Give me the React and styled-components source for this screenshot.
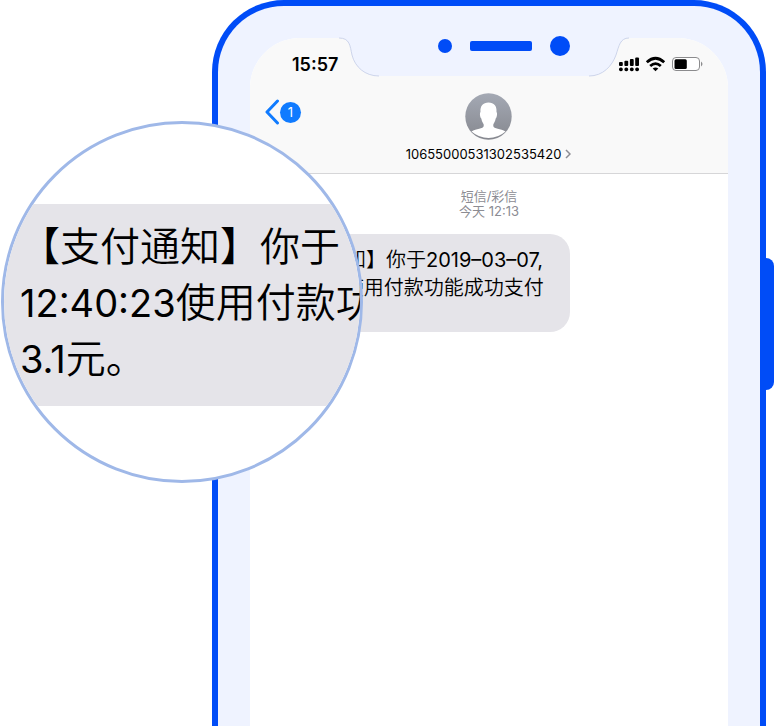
import React from "react";
import styled, { createGlobalStyle } from "styled-components";

const blue = "#004cf7";
const frame = "#eff3ff";
const bubble = "#e5e4e9";

const GlobalStyle = createGlobalStyle`
  * { box-sizing: border-box; }
  body {
    margin: 0;
    background: #fff;
    color: #000;
    font-family: Inter, "Noto Sans CJK SC", sans-serif;
  }
`;

const Page = styled.main`
  position: relative;
  display: flex;
  min-height: 100vh;
  padding-left: 212px;
  overflow: hidden;
`;

const Phone = styled.section`
  position: relative;
  flex: 1;
  display: flex;
  padding: 32px 32px 0;
  border: 6px solid ${blue};
  border-bottom: 0;
  border-radius: 72px 72px 0 0;
  background: ${frame};
`;

const SideButton = styled.div`
  width: 8px;
  height: 132px;
  margin-top: 258px;
  border-radius: 0 8px 8px 0;
  background: ${blue};
`;

const Screen = styled.div`
  flex: 1;
  border-radius: 50px 50px 0 0;
  background: #fff;
  overflow: hidden;
`;

const Header = styled.header`
  border-bottom: 1px solid #d6d6d8;
  background: #f9f9f9;
`;

const StatusBar = styled.div`
  display: flex;
  align-items: center;
  justify-content: space-between;
  height: 52px;
  padding: 0 25px 0 42px;
`;

const Time = styled.time`
  padding-top: 2px;
  font-size: 18px;
  line-height: 24px;
  font-weight: 600;
`;

const StatusIcons = styled.svg`
  display: block;
  width: 85px;
  height: 16px;
`;

const NavBar = styled.nav`
  display: grid;
  grid-template-columns: 1fr auto 1fr;
  align-items: start;
  padding: 3px 15px 11px 14px;
`;

const BackButton = styled.button`
  display: flex;
  align-items: center;
  justify-self: start;
  margin-top: 6px;
  padding: 0;
  border: 0;
  background: none;
  cursor: pointer;
`;

const BackIcon = styled.svg`
  display: block;
  width: 16px;
  height: 26px;
`;

const Badge = styled.span`
  width: 21px;
  height: 21px;
  border-radius: 50%;
  background: #107bff;
  color: #fff;
  font-family: Inter, sans-serif;
  font-size: 13px;
  line-height: 21px;
  text-align: center;
`;

const Contact = styled.button`
  display: flex;
  flex-direction: column;
  align-items: center;
  gap: 6px;
  padding: 0;
  border: 0;
  background: none;
  color: #000;
  font-family: inherit;
  cursor: pointer;
`;

const Avatar = styled.svg`
  display: block;
  width: 47px;
  height: 47px;
`;

const Sender = styled.span`
  display: flex;
  align-items: center;
  gap: 4px;
  font-size: 13px;
  line-height: 16px;
`;

const Chevron = styled.svg`
  display: block;
  width: 6px;
  height: 10px;
`;

const Thread = styled.div`
  padding: 15px 4px;
`;

const Stamp = styled.p`
  margin: 0 0 15px;
  color: #8c8c93;
  font-size: 13px;
  line-height: 15px;
  text-align: center;
`;

const Message = styled.p`
  width: fit-content;
  min-width: 316px;
  margin: 0;
  padding: 12px 12px 2px;
  border-radius: 20px;
  background: ${bubble};
  font-size: 20px;
  line-height: 28px;
  font-weight: 350;
  white-space: nowrap;
`;

const Figures = styled.span`
  font-size: ${(p) => p.$size}px;
  line-height: 1;
  font-weight: 400;
`;

const Housing = styled.div`
  position: absolute;
  top: 30px;
  left: 122px;
  right: 132px;
  display: flex;
  flex-direction: column;
  align-items: center;
`;

const NotchShape = styled.svg`
  position: absolute;
  top: 1px;
  width: 290px;
  height: 40px;
`;

const Sensors = styled.div`
  position: relative;
  display: flex;
  align-items: center;
  gap: 18px;
  margin-left: 40px;
`;

const Sensor = styled.span`
  width: ${(p) => p.$width}px;
  height: ${(p) => p.$height}px;
  border-radius: ${(p) => p.$radius}px;
  background: ${blue};
`;

const Lens = styled.aside`
  position: absolute;
  top: 121px;
  left: 1px;
  width: 362px;
  height: 362px;
  padding-top: 80px;
  border: 3px solid #9fb8e8;
  border-radius: 50%;
  background: #fff;
  overflow: hidden;
`;

const LensMessage = styled.p`
  margin: 0;
  padding: 15px 16px 19px;
  background: ${bubble};
  font-size: 40px;
  line-height: 56px;
  font-weight: 350;
  white-space: nowrap;
`;

export default function App() {
  return (
    <Page>
      <GlobalStyle />
      <Phone>
        <Screen>
          <Header>
            <StatusBar>
              <Time>15:57</Time>
              <StatusIcons viewBox="0 0 85 16" aria-label="Signal, Wi-Fi, battery">
                <g>
                  <rect x="1" y="6" width="3.8" height="4" rx="1" />
                  <rect x="6.4" y="4.8" width="3.8" height="5.2" rx="1" />
                  <rect x="11.9" y="3" width="3.8" height="7" rx="1" />
                  <rect x="17.2" y="1.5" width="3.8" height="8.5" rx="1" />
                  <rect x="1" y="11.5" width="3.8" height="3.8" rx="1.7" />
                  <rect x="6.4" y="11.5" width="3.8" height="3.8" rx="1.7" />
                  <rect x="11.9" y="11.5" width="3.8" height="3.8" rx="1.7" />
                  <rect x="17.2" y="11.5" width="3.8" height="3.8" rx="1.7" />
                </g>
                <g fill="none" stroke="#000" strokeWidth="2.8">
                  <path d="M28.8 6.3 Q37.5 -1.7 46.2 6.3" />
                  <path d="M32.2 10 Q37.5 5.2 42.8 10" />
                </g>
                <path d="M34.7 12.4 Q37.5 10.4 40.3 12.4 L37.5 15.2 Z" />
                <rect x="54.5" y="1.5" width="27" height="13" rx="3.5" fill="#fff" stroke="#8b8b8d" />
                <rect x="56.5" y="3.3" width="12.3" height="9.7" rx="1.5" />
                <path d="M83 5.5 Q86 8 83 10.5 Z" fill="#8b8b8d" />
              </StatusIcons>
            </StatusBar>
            <NavBar>
              <BackButton aria-label="Back, 1 unread">
                <BackIcon viewBox="0 0 16 26" fill="none" stroke="#107bff" strokeWidth="3" strokeLinecap="round" strokeLinejoin="round">
                  <path d="M13.5 2 L3 13 L13.5 24" />
                </BackIcon>
                <Badge>1</Badge>
              </BackButton>
              <Contact>
                <Avatar viewBox="0 0 47 47">
                  <defs>
                    <linearGradient id="avatarShade" x1="0" y1="0" x2="0" y2="1">
                      <stop offset="0" stopColor="#a4a9b4" />
                      <stop offset="1" stopColor="#86888f" />
                    </linearGradient>
                  </defs>
                  <circle cx="23.5" cy="23.5" r="23.2" fill="url(#avatarShade)" />
                  <path
                    fill="#fff"
                    d="M23.5 9.5 C29 9.5 32 13 31.5 19 C32.5 20 32 24.5 30.7 25.5 C30.2 28.5 29 30 28.3 31.5 V33 C28.5 36 36 35.5 40.5 38.5 Q33 45 23.5 45 Q14 45 6.5 38.5 C11 35.5 18.5 36 18.7 33 V31.5 C18 30 16.8 28.5 16.3 25.5 C15 24.5 14.5 20 15.5 19 C15 13 18 9.5 23.5 9.5 Z"
                  />
                </Avatar>
                <Sender>
                  10655000531302535420
                  <Chevron viewBox="0 0 6 10" fill="none" stroke="#8c8c93" strokeWidth="1.5">
                    <path d="M1 1 L5 5 L1 9" />
                  </Chevron>
                </Sender>
              </Contact>
            </NavBar>
          </Header>
          <Thread>
            <Stamp>
              短信/彩信
              <br />
              今天 12:13
            </Stamp>
            <Message>
              【支付通知】你于<Figures $size={20}>2019–03–07,</Figures>
              <br />
              <Figures $size={19}>12:40:23</Figures>使用付款功能成功支付
              <br />
              <Figures $size={19}>3.1</Figures>元。
            </Message>
          </Thread>
        </Screen>
        <Housing>
          <NotchShape viewBox="0 0 290 40">
            <path
              fill={frame}
              d="M0 0 H290 V1 C281 1 280 9 277 18 C273 29 264 39 250 39 H40 C26 39 16 30 13 18 C11 9 11 1 0 1 Z"
            />
            <path
              fill="none"
              stroke="#c3cbe6"
              strokeWidth="0.8"
              d="M290 1 C281 1 280 9 277 18 C273 29 264 39 250 39 M40 39 C26 39 16 30 13 18 C11 9 11 1 0 1"
            />
          </NotchShape>
          <Sensors>
            <Sensor $width={14} $height={14} $radius={7} />
            <Sensor $width={62} $height={10} $radius={2} />
            <Sensor $width={20} $height={20} $radius={10} />
          </Sensors>
        </Housing>
      </Phone>
      <SideButton />
      <Lens>
        <LensMessage>
          【支付通知】你于
          <br />
          <Figures $size={38}>12:40:23</Figures>使用付款功能
          <br />
          <Figures $size={38}>3.1</Figures>元。
        </LensMessage>
      </Lens>
    </Page>
  );
}
